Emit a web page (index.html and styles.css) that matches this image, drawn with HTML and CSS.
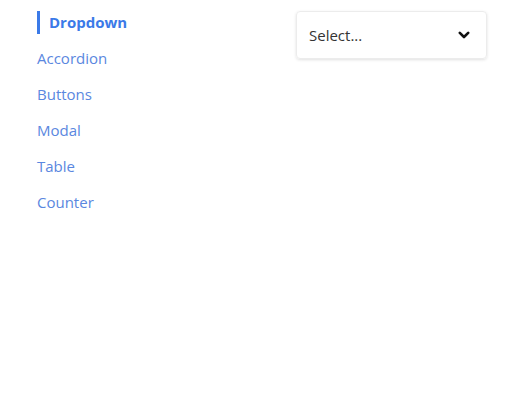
FILE: index.html
```html
<!DOCTYPE html>
<html>
<head>
<meta charset="utf-8">
<link rel="stylesheet" href="styles.css">
</head>
<body>
<div class="layout">
  <nav class="sidebar">
    <ul class="menu">
      <li class="menu-item"><a class="menu-link active">Dropdown</a></li>
      <li class="menu-item"><a class="menu-link">Accordion</a></li>
      <li class="menu-item"><a class="menu-link">Buttons</a></li>
      <li class="menu-item"><a class="menu-link">Modal</a></li>
      <li class="menu-item"><a class="menu-link">Table</a></li>
      <li class="menu-item"><a class="menu-link">Counter</a></li>
    </ul>
  </nav>
  <main class="content">
    <div class="select">
      <span class="select-label">Select...</span>
      <svg class="chevron" width="12" height="8" viewBox="0 0 12 8"><path d="M1.8 1.8 L6 6 L10.2 1.8" fill="none" stroke="#111" stroke-width="2.6" stroke-linecap="round" stroke-linejoin="round"/></svg>
    </div>
  </main>
</div>
</body>
</html>
```

FILE: styles.css
```css
html, body {
  margin: 0;
  padding: 0;
  background: #ffffff;
}
body {
  font-family: "Open Sans", "Noto Sans", sans-serif;
  font-size: 15px;
}
.layout {
  display: flex;
  padding-left: 37px;
}
.sidebar {
  width: 259px;
  padding-top: 4px;
}
.menu {
  list-style: none;
  margin: 0;
  padding: 0;
}
.menu-item {
  height: 36px;
  display: flex;
  align-items: center;
}
.menu-link {
  color: #5a87e0;
  text-decoration: none;
}
.menu-link.active {
  color: #3b7ae8;
  font-weight: 700;
  border-left: 3px solid #3b7ae8;
  padding-left: 9px;
  line-height: 23px;
}
.content {
  padding-top: 11px;
}
.select {
  width: 191px;
  height: 48px;
  box-sizing: border-box;
  border: 1px solid #ececec;
  border-radius: 4px;
  box-shadow: 0 1px 3px rgba(0,0,0,0.12);
  display: flex;
  align-items: center;
  justify-content: space-between;
  padding: 0 16px 0 12px;
}
.select-label {
  color: #333;
}
.chevron {
  display: block;
}
```
